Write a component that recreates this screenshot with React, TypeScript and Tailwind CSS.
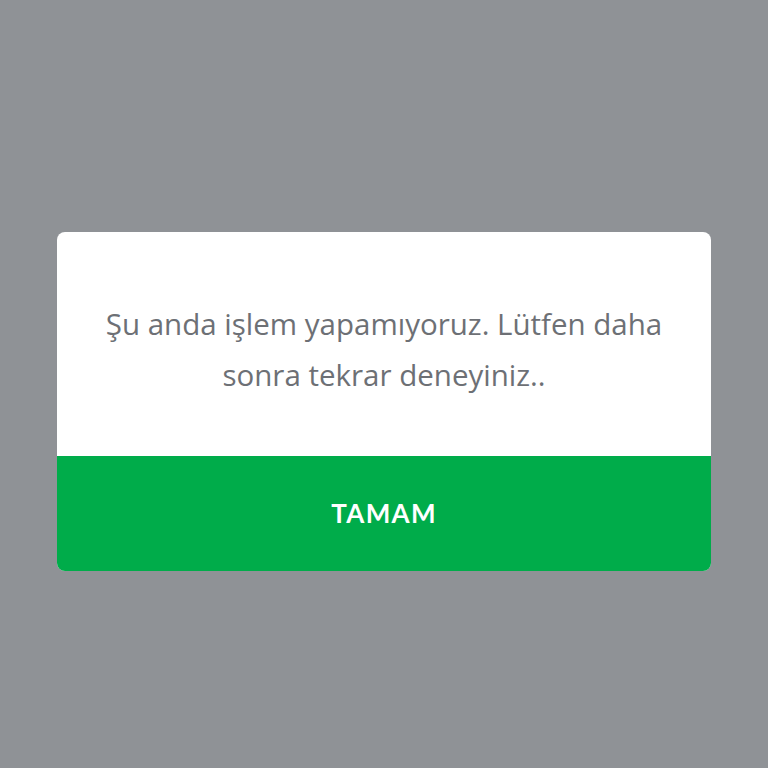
export default function App() {
  return (
    <div className="flex h-[768px] w-[768px] items-center justify-center bg-[#8f9296] pt-[35px]">
      <div className="flex w-[654px] flex-col overflow-hidden rounded-lg bg-white">
        <div className="flex h-[224px] items-center justify-center px-10 pt-[10px]">
          <p className="text-center font-['Open_Sans',sans-serif] text-[29.5px] leading-[51px] text-[#6d7075]">
            Şu anda işlem yapamıyoruz. Lütfen daha sonra tekrar deneyiniz..
          </p>
        </div>
        <button className="flex h-[115px] items-center justify-center bg-[#00ac4a] font-['Lato',sans-serif] text-[26px] font-bold tracking-wider text-white">
          TAMAM
        </button>
      </div>
    </div>
  )
}
